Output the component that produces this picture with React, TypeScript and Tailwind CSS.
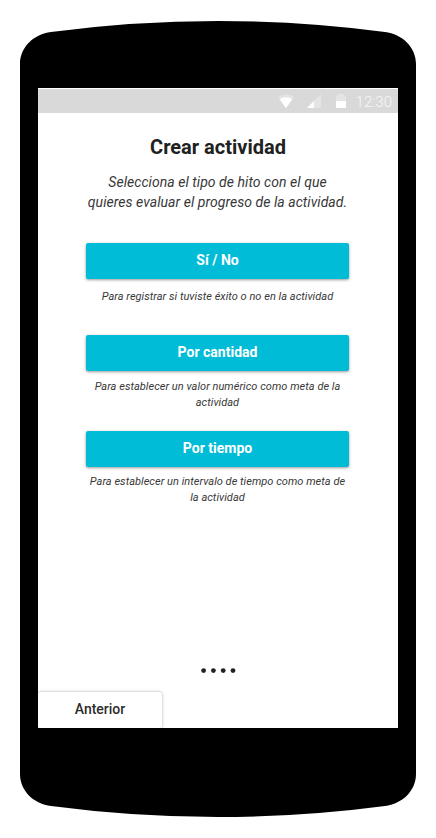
type OptionProps = { label: string; lines: string[]; className: string; hintClass: string };

const sans = "font-[Roboto,'Liberation_Sans',sans-serif]";

function Option({ label, lines, className, hintClass }: OptionProps) {
  return (
    <section className={`mr-px flex flex-col items-center ${className}`}>
      <button className="h-9 w-[263px] rounded-[2px] bg-[#00bcd7] pb-0.5 text-center text-sm font-bold text-white shadow-[0_1px_3px_rgba(0,0,0,0.4)]">
        {label}
      </button>
      <p className={`text-center text-[11px] leading-4 tracking-[0.035px] whitespace-nowrap text-[#383838] italic ${hintClass}`}>
        {lines.map((line) => (
          <span key={line} className="block">{line}</span>
        ))}
      </p>
    </section>
  );
}

function StatusBar() {
  return (
    <header className="flex h-[25px] w-full shrink-0 items-center justify-end border-t border-white bg-[#d9d9d9] pr-1.5">
      <svg width="70" height="24" viewBox="0 0 70 24" aria-hidden="true">
        <path d="M0 8.2C4.5 4.6 11.5 4.6 16 8.2L8 19Z" fill="#e4e4e4" />
        <path d="M1.8 10.4C5.5 7.6 10.5 7.6 14.2 10.4L8 19Z" fill="#fff" />
        <path d="M43 5V19H29Z" fill="#e4e4e4" />
        <path d="M36 12V19H29Z" fill="#fff" />
        <path d="M58 12V8Q58 7 59 6.5L60.5 5H65.5L67 6.5Q68 7 68 8V12Z" fill="#e4e4e4" />
        <path d="M58 12H68V18Q68 19 67 19H59Q58 19 58 18Z" fill="#fff" />
      </svg>
      <time className="mt-0.5 ml-2 text-[15px] leading-6 font-light text-[#f7f7f7]">12:30</time>
    </header>
  );
}

export default function App() {
  return (
    <div className={`flex h-[838px] w-[436px] flex-col items-center bg-white ${sans}`}>
      <svg className="block shrink-0" width="436" height="88" viewBox="0 0 436 88" aria-hidden="true">
        <path d="M20 88V64C20 47 34 34 51 32Q134 21 218 21T385 32C402 34 416 47 416 64V88Z" />
      </svg>
      <div className="flex h-[640px] w-[396px] shrink-0 justify-center bg-black">
        <main className="flex w-[360px] flex-col items-center overflow-hidden bg-white">
          <StatusBar />
          <h1 className="mt-5 text-[20px] leading-7 font-bold text-[#212121]">Crear actividad</h1>
          <p className="mt-[11px] mr-px text-center text-sm leading-5 tracking-[0.05px] whitespace-nowrap text-[#383838] italic">
            <span className="block">Selecciona el tipo de hito con el que</span>
            <span className="block">quieres evaluar el progreso de la actividad.</span>
          </p>
          <Option
            className="mt-[31px] h-[92px]"
            hintClass="mt-2.5"
            label="Sí / No"
            lines={["Para registrar si tuviste éxito o no en la actividad"]}
          />
          <Option
            className="h-24"
            hintClass="mt-2"
            label="Por cantidad"
            lines={["Para establecer un valor numérico como meta de la", "actividad"]}
          />
          <Option
            className="h-24"
            hintClass="mt-[7px]"
            label="Por tiempo"
            lines={["Para establecer un intervalo de tiempo como meta de", "la actividad"]}
          />
          <svg className="mt-auto mb-[18px]" width="36" height="7" viewBox="0 0 36 7" fill="#212121" aria-hidden="true">
            <circle cx="3.6" cy="3.6" r="2.4" />
            <circle cx="13.4" cy="3.6" r="2.4" />
            <circle cx="23.2" cy="3.6" r="2.4" />
            <circle cx="33" cy="3.6" r="2.4" />
          </svg>
          <button className="h-9 w-[124px] shrink-0 self-start rounded-[2px] bg-white pb-0.5 text-sm font-medium text-[#2c2c2c] shadow-[0_0_3px_rgba(0,0,0,0.35)]">
            Anterior
          </button>
        </main>
      </div>
      <svg className="block shrink-0" width="436" height="110" viewBox="0 0 436 110" aria-hidden="true">
        <path d="M20 0V46C20 63 34 76 51 78Q134 89 218 89T385 78C402 76 416 63 416 46V0Z" />
      </svg>
    </div>
  );
}
